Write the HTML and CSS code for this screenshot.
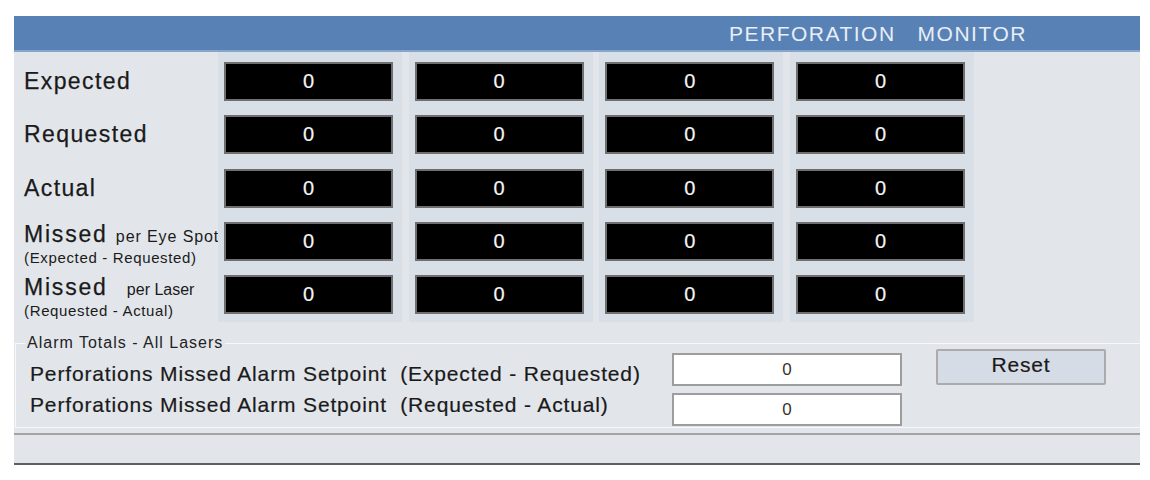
FILE: index.html
```html
<!DOCTYPE html>
<html lang="en">
<head>
<meta charset="utf-8">
<title>Perforation Monitor</title>
<link rel="stylesheet" href="styles.css">
</head>
<body>
<div class="panel">
  <div class="header"><span class="title">PERFORATION&nbsp;&nbsp;&nbsp;MONITOR</span></div>
  <div class="grid">
    <div class="labels">
      <div class="label">Expected</div>
      <div class="label">Requested</div>
      <div class="label">Actual</div>
      <div class="label label-double">
        <div class="main">Missed <span class="per">per Eye Spot</span></div>
        <div class="sub">(Expected - Requested)</div>
      </div>
      <div class="label label-double">
        <div class="main">Missed <span class="per per-laser">per Laser</span></div>
        <div class="sub">(Requested - Actual)</div>
      </div>
    </div>
    <div class="col">
      <div class="box">0</div><div class="box">0</div><div class="box">0</div><div class="box">0</div><div class="box">0</div>
    </div>
    <div class="col">
      <div class="box">0</div><div class="box">0</div><div class="box">0</div><div class="box">0</div><div class="box">0</div>
    </div>
    <div class="col">
      <div class="box">0</div><div class="box">0</div><div class="box">0</div><div class="box">0</div><div class="box">0</div>
    </div>
    <div class="col">
      <div class="box">0</div><div class="box">0</div><div class="box">0</div><div class="box">0</div><div class="box">0</div>
    </div>
  </div>
  <fieldset class="alarms">
    <legend class="legend">Alarm Totals - All Lasers</legend>
    <div class="alarm-grid">
      <div class="alarm-label row1">Perforations Missed Alarm Setpoint&nbsp; (Expected - Requested)</div>
      <div class="field row1">0</div>
      <button class="reset" type="button">Reset</button>
      <div class="alarm-label row2">Perforations Missed Alarm Setpoint&nbsp; (Requested - Actual)</div>
      <div class="field row2">0</div>
    </div>
  </fieldset>
  <div class="status"></div>
</div>
</body>
</html>
```

FILE: styles.css
```css
* {
  box-sizing: border-box;
}

html, body {
  margin: 0;
  padding: 0;
  background: #ffffff;
}

body {
  font-family: "Liberation Sans", Arial, sans-serif;
  color: #1a1a1a;
}

.panel {
  margin: 16px 0 0 14px;
  width: 1126px;
  background: #e2e6eb;
}

.header {
  height: 36px;
  background: #5882b5;
  border-bottom: 2px solid #86a5cb;
  padding-left: 715px;
  display: flex;
  align-items: center;
}

.title {
  font-size: 21px;
  letter-spacing: 1.5px;
  color: #e9eef6;
  line-height: 22px;
  padding-top: 2px;
}

.grid {
  display: grid;
  grid-template-columns: 197.33px repeat(4, 184px);
  column-gap: 6.67px;
}

.labels {
  padding: 10px 0 8px 10px;
  display: flex;
  flex-direction: column;
  gap: 14.25px;
}

.label {
  height: 39px;
  display: flex;
  align-items: center;
  font-size: 23px;
  letter-spacing: 1.4px;
  white-space: nowrap;
  -webkit-text-stroke: 0.25px #1a1a1a;
}

.label-double {
  flex-direction: column;
  align-items: flex-start;
  justify-content: flex-start;
  -webkit-text-stroke: 0;
}

.label-double .main {
  font-size: 23px;
  line-height: 24px;
  letter-spacing: 1.8px;
  white-space: nowrap;
  -webkit-text-stroke: 0.25px #1a1a1a;
}

.per {
  font-size: 16px;
  letter-spacing: 0.9px;
  -webkit-text-stroke: 0;
}

.per-laser {
  margin-left: 11px;
  letter-spacing: 0;
}

.label-double .sub {
  font-size: 15px;
  line-height: 17px;
  letter-spacing: 0.65px;
  white-space: nowrap;
}

.col {
  background: #d9dfe6;
  padding: 10px 9px 8px 6px;
  display: flex;
  flex-direction: column;
  gap: 14.25px;
}

.box {
  height: 39px;
  width: 169px;
  background: #000000;
  border: 2px solid #6f6f6f;
  color: #f4f4f4;
  font-size: 20px;
  display: flex;
  align-items: center;
  justify-content: center;
  -webkit-text-stroke: 0.2px #f4f4f4;
}

.alarms {
  margin: 12px 0 0 1px;
  padding: 0 0 1px 9px;
  border: 1px solid #f7f8fa;
  border-right: none;
  min-width: 0;
}

.legend {
  font-size: 16px;
  line-height: 18px;
  letter-spacing: 1px;
  padding: 0 2px;
  color: #222222;
}

.alarm-grid {
  display: grid;
  grid-template-columns: 647px 230px 204px;
  grid-template-rows: 37px 33px;
  row-gap: 7px;
  margin-top: -3px;
}

.alarm-label {
  padding-left: 5px;
  font-size: 21px;
  line-height: 24px;
  letter-spacing: 0.85px;
  white-space: nowrap;
  -webkit-text-stroke: 0.2px #1a1a1a;
}

.alarm-label.row1 {
  align-self: end;
  grid-row: 1;
  grid-column: 1;
}

.alarm-label.row2 {
  align-self: start;
  grid-row: 2;
  grid-column: 1;
}

.field {
  height: 33px;
  background: #ffffff;
  border: 2px solid #9d9d9d;
  font-size: 17px;
  color: #3a3228;
  display: flex;
  align-items: center;
  justify-content: center;
}

.field.row1 {
  grid-row: 1;
  grid-column: 2;
  align-self: end;
}

.field.row2 {
  grid-row: 2;
  grid-column: 2;
}

.reset {
  grid-row: 1;
  grid-column: 3;
  align-self: start;
  margin-left: 34px;
  width: 170px;
  height: 36px;
  background: #d5dce6;
  border: 2px solid #ababab;
  border-radius: 2px;
  font-family: "Liberation Sans", Arial, sans-serif;
  font-size: 21px;
  letter-spacing: 0.8px;
  color: #1a1a1a;
  padding: 0 0 4px 0;
  -webkit-text-stroke: 0.2px #1a1a1a;
}

.status {
  margin-top: 5px;
  height: 32px;
  border-top: 2px solid #a3a3a3;
  border-bottom: 2px solid #5f5f5f;
}
```
